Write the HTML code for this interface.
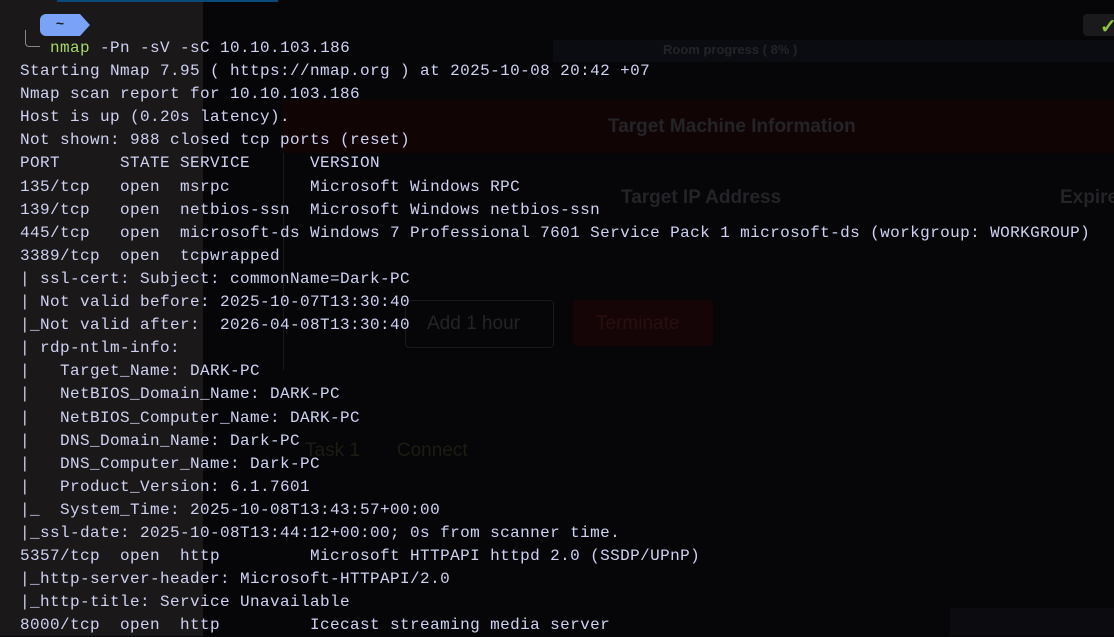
<!DOCTYPE html>
<html><head><meta charset="utf-8"><style>
html,body{margin:0;padding:0;width:1114px;height:636px;overflow:hidden;background:#060609;}
.left{position:absolute;left:0;top:0;width:203px;height:636px;background:#1a1819;}
.topbar{position:absolute;left:57px;top:0;width:221px;height:2px;background:#0a4a7a;}
.bg{position:absolute;font-family:"Liberation Sans",sans-serif;font-weight:bold;color:#242428;}
pre{position:absolute;left:20px;top:37px;margin:0;font-family:"Liberation Mono",monospace;font-size:16px;letter-spacing:0.4px;line-height:23.1px;color:#cfd2f2;}
.g{color:#a6d96a;}
.pill{position:absolute;left:40px;top:14px;width:40px;height:22px;background:#7aa2f7;border-radius:6px 0 0 6px;color:#1a1b26;font:bold 14px "Liberation Mono",monospace;text-align:center;line-height:22px;}
.pill:after{content:"";position:absolute;right:-10px;top:0;border-left:10px solid #7aa2f7;border-top:11px solid transparent;border-bottom:11px solid transparent;}
.corner{position:absolute;left:25px;top:30px;width:14px;height:16px;border-left:1.5px solid #888;border-bottom:1.5px solid #888;border-bottom-left-radius:4px;}
</style></head><body>
<div class="left"></div>
<div class="topbar"></div>
<div style="position:absolute;left:553px;top:40px;width:561px;height:22px;background:#0b0c11"></div>
<div class="bg" style="left:663px;top:42px;font-size:13px">Room progress ( 8% )</div>
<div style="position:absolute;left:1083px;top:14px;width:40px;height:22px;background:#1a1a1d;border-radius:4px 0 0 4px"></div>
<div style="position:absolute;left:1100px;top:14px;color:#8dc63f;font:bold 20px 'Liberation Sans',sans-serif">✓</div>
<div style="position:absolute;left:283px;top:100px;width:831px;height:53px;background:#110405"></div>
<div class="bg" style="left:608px;top:116px;font-size:19px">Target Machine Information</div>
<div class="bg" style="left:621px;top:187px;font-size:19px">Target IP Address</div>
<div class="bg" style="left:1060px;top:187px;font-size:19px">Expire</div>
<div style="position:absolute;left:283px;top:153px;width:1px;height:217px;background:#1a1a1e"></div>
<div style="position:absolute;left:405px;top:300px;width:147px;height:46px;border:1px solid #1a1a1e;border-radius:4px"></div>
<div style="position:absolute;left:573px;top:300px;width:140px;height:46px;background:#150506;border-radius:4px"></div>
<div class="bg" style="left:596px;top:313px;font-size:19px;font-weight:normal;color:#2a0e0e">Terminate</div>
<div class="bg" style="left:427px;top:313px;font-size:19px;font-weight:normal">Add 1 hour</div>
<div class="bg" style="left:305px;top:440px;font-size:19px;font-weight:normal;color:#1c1c12">Task 1 &nbsp; &nbsp; &nbsp; Connect</div>
<div style="position:absolute;left:950px;top:608px;width:164px;height:28px;background:#0c0c10"></div>
<div class="pill">~</div>
<div class="corner"></div>
<pre>   <span class="g">nmap</span> -Pn -sV -sC 10.10.103.186
Starting Nmap 7.95 ( https://nmap.org ) at 2025-10-08 20:42 +07
Nmap scan report for 10.10.103.186
Host is up (0.20s latency).
Not shown: 988 closed tcp ports (reset)
PORT      STATE SERVICE      VERSION
135/tcp   open  msrpc        Microsoft Windows RPC
139/tcp   open  netbios-ssn  Microsoft Windows netbios-ssn
445/tcp   open  microsoft-ds Windows 7 Professional 7601 Service Pack 1 microsoft-ds (workgroup: WORKGROUP)
3389/tcp  open  tcpwrapped
| ssl-cert: Subject: commonName=Dark-PC
| Not valid before: 2025-10-07T13:30:40
|_Not valid after:  2026-04-08T13:30:40
| rdp-ntlm-info:
|   Target_Name: DARK-PC
|   NetBIOS_Domain_Name: DARK-PC
|   NetBIOS_Computer_Name: DARK-PC
|   DNS_Domain_Name: Dark-PC
|   DNS_Computer_Name: Dark-PC
|   Product_Version: 6.1.7601
|_  System_Time: 2025-10-08T13:43:57+00:00
|_ssl-date: 2025-10-08T13:44:12+00:00; 0s from scanner time.
5357/tcp  open  http         Microsoft HTTPAPI httpd 2.0 (SSDP/UPnP)
|_http-server-header: Microsoft-HTTPAPI/2.0
|_http-title: Service Unavailable
8000/tcp  open  http         Icecast streaming media server</pre>
</body></html>
